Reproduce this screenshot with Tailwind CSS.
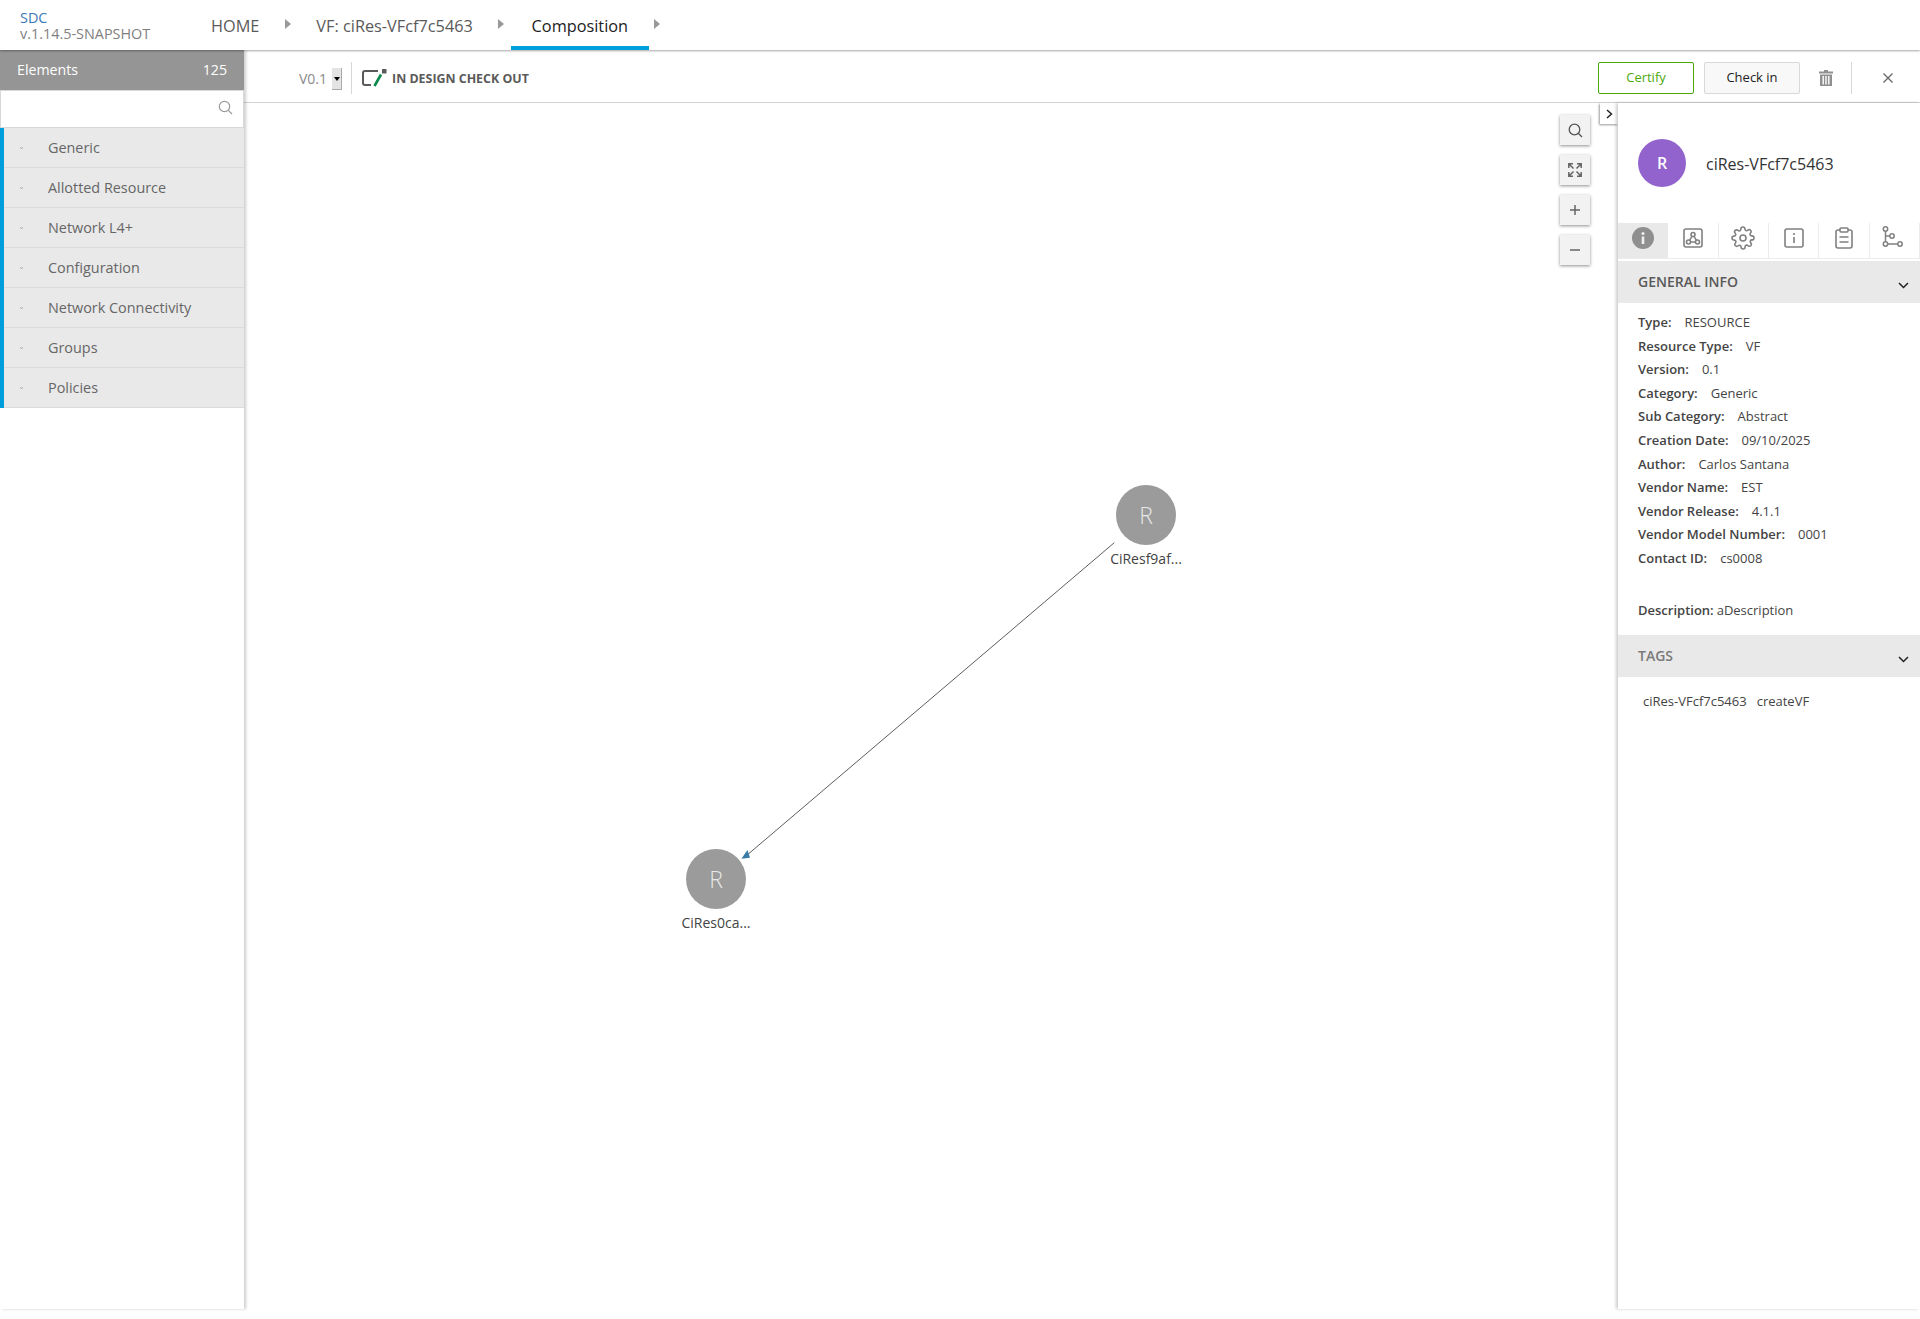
<!DOCTYPE html>
<html>
<head>
<meta charset="utf-8">
<script src="https://cdn.jsdelivr.net/npm/@tailwindcss/browser@4"></script>
</head>
<body class="bg-white font-['Open_Sans',sans-serif] w-[1920px] h-[1319px] overflow-hidden text-[#5a5a5a]">
<header class="relative z-20 flex h-[50px] items-stretch bg-white shadow-[0_1px_2px_rgba(0,0,0,0.35)]">
  <div class="w-[211px] pl-5 pt-[10px] text-[14.4px]">
    <div class="leading-[16px] text-[#3d7ab8]">SDC</div>
    <div class="leading-[15px] text-[#7f7f7f]">v.1.14.5-SNAPSHOT</div>
  </div>
  <nav class="flex items-stretch text-[16.3px]">
    <div class="pt-[14px] text-[#5a5a5a]">HOME</div>
    <svg class="mt-[19px] ml-[26px] mr-[25px]" width="6" height="10" viewBox="0 0 6 10"><path d="M0 0l6 5-6 5z" fill="#999"/></svg>
    <div class="pt-[14px]">VF: ciRes-VFcf7c5463</div>
    <svg class="mt-[19px] ml-[25px] mr-[7px]" width="6" height="10" viewBox="0 0 6 10"><path d="M0 0l6 5-6 5z" fill="#999"/></svg>
    <div class="w-[138px] pt-[14px] text-center text-[#222] border-b-4 border-[#009fdb]">Composition</div>
    <svg class="mt-[19px] ml-[5px]" width="6" height="10" viewBox="0 0 6 10"><path d="M0 0l6 5-6 5z" fill="#999"/></svg>
  </nav>
</header>
<main class="flex h-[1259px] items-stretch">
  <aside class="relative z-10 w-[244px] shadow-[2px_0_3px_rgba(0,0,0,0.2)] bg-white">
    <div class="flex h-10 items-center justify-between bg-[#959595] pl-[17px] pr-[17px] text-[14.2px] font-medium text-white"><span>Elements</span><span>125</span></div>
    <div class="flex h-[38px] items-center justify-end border border-[#d8d8d8] bg-white pr-[10px] pb-[3px]">
      <svg width="15" height="15" viewBox="0 0 15 15" fill="none" stroke="#999" stroke-width="1.2"><circle cx="6.5" cy="6.5" r="5.2"/><path d="M10.3 10.3L14 14"/></svg>
    </div>
    <div class="border-l-4 border-[#009fdb] text-[14.4px] font-medium text-[#666]">
      <div class="flex h-10 items-center border-b border-[#dcdcdc] bg-[#e9e9e9]"><svg class="ml-[16px] mr-[25px]" width="3" height="2" viewBox="0 0 3 2"><path d="M0 0l1.5 2L3 0" fill="none" stroke="#999" stroke-width="0.7"/></svg>Generic</div>
      <div class="flex h-10 items-center border-b border-[#dcdcdc] bg-[#e9e9e9]"><svg class="ml-[16px] mr-[25px]" width="3" height="2" viewBox="0 0 3 2"><path d="M0 0l1.5 2L3 0" fill="none" stroke="#999" stroke-width="0.7"/></svg>Allotted Resource</div>
      <div class="flex h-10 items-center border-b border-[#dcdcdc] bg-[#e9e9e9]"><svg class="ml-[16px] mr-[25px]" width="3" height="2" viewBox="0 0 3 2"><path d="M0 0l1.5 2L3 0" fill="none" stroke="#999" stroke-width="0.7"/></svg>Network L4+</div>
      <div class="flex h-10 items-center border-b border-[#dcdcdc] bg-[#e9e9e9]"><svg class="ml-[16px] mr-[25px]" width="3" height="2" viewBox="0 0 3 2"><path d="M0 0l1.5 2L3 0" fill="none" stroke="#999" stroke-width="0.7"/></svg>Configuration</div>
      <div class="flex h-10 items-center border-b border-[#dcdcdc] bg-[#e9e9e9]"><svg class="ml-[16px] mr-[25px]" width="3" height="2" viewBox="0 0 3 2"><path d="M0 0l1.5 2L3 0" fill="none" stroke="#999" stroke-width="0.7"/></svg>Network Connectivity</div>
      <div class="flex h-10 items-center border-b border-[#dcdcdc] bg-[#e9e9e9]"><svg class="ml-[16px] mr-[25px]" width="3" height="2" viewBox="0 0 3 2"><path d="M0 0l1.5 2L3 0" fill="none" stroke="#999" stroke-width="0.7"/></svg>Groups</div>
      <div class="flex h-10 items-center border-b border-[#dcdcdc] bg-[#e9e9e9]"><svg class="ml-[16px] mr-[25px]" width="3" height="2" viewBox="0 0 3 2"><path d="M0 0l1.5 2L3 0" fill="none" stroke="#999" stroke-width="0.7"/></svg>Policies</div>
    </div>
  </aside>
  <div class="flex flex-1 flex-col">
    <div class="flex h-[53px] items-center border-b border-[#d2d2d2] bg-white pt-[4px]">
      <span class="ml-[55px] mt-[2px] text-sm text-[#8a8a8a]">V0.1</span>
      <div class="ml-[5px] mt-[2px] flex h-[22px] w-[10px] items-center justify-center border-r border-b border-[#aaa] bg-[#e4e4e4]"><span class="border-x-[3px] border-t-[4px] border-x-transparent border-t-black"></span></div>
      <div class="ml-[9px] h-[32px] w-px bg-[#d8d8d8]"></div>
      <svg class="ml-[10px]" width="25" height="18" viewBox="0 0 25 18" fill="none"><path d="M16 2H3a2 2 0 0 0-2 2v10a2 2 0 0 0 2 2h6" stroke="#5a5a5a" stroke-width="2"/><rect x="20" y="0" width="4.500" height="4.500" rx="0.500" fill="#5a5a5a"/><path d="M19 5.500L12.500 17" stroke="#0c8a4e" stroke-width="2.600"/></svg>
      <span class="ml-[5px] mt-[2px] text-[12.4px] font-bold text-[#5a5a5a]">IN DESIGN CHECK OUT</span>
      <div class="ml-auto flex h-8 w-[96px] items-center justify-center rounded-[2px] border border-[#4ca90c] text-[13px] font-medium text-[#4ca90c]">Certify</div>
      <div class="ml-[10px] flex h-8 w-[96px] items-center justify-center rounded-[2px] border border-[#d8d8d8] bg-[#f8f8f8] text-[13px] font-medium text-[#222]">Check in</div>
      <svg class="ml-[19px]" width="14" height="16" viewBox="0 0 14 16" fill="#8f8f8f"><path d="M5 0h4v1.5h5v2H0v-2h5z"/><path d="M1 4.500h12V16H1zM3.500 6v8.500h1.400V6zM6.300 6v8.500h1.400V6zM9.100 6v8.500h1.400V6z" fill-rule="evenodd"/></svg>
      <div class="ml-[18px] h-8 w-px bg-[#d8d8d8]"></div>
      <svg class="ml-[31px] mr-[27px]" width="10" height="10" viewBox="0 0 10 10" stroke="#666" stroke-width="1.3"><path d="M0.500 0.500l9 9M9.500 0.500l-9 9"/></svg>
    </div>
    <div class="flex flex-1">
      <div class="relative flex-1">
        <div class="absolute top-[12px] right-[28px] flex flex-col gap-[10px]">
          <div class="flex size-[30px] items-center justify-center bg-[#f2f2f2] shadow-[0_1px_3px_rgba(0,0,0,0.45)]"><svg width="15" height="15" viewBox="0 0 15 15" fill="none" stroke="#555" stroke-width="1.300"><circle cx="6.500" cy="6.500" r="5.300"/><path d="M10.300 10.300L14 14"/></svg></div>
          <div class="flex size-[30px] items-center justify-center bg-[#f2f2f2] shadow-[0_1px_3px_rgba(0,0,0,0.45)]"><svg width="14" height="14" viewBox="0 0 14 14" fill="none" stroke="#666" stroke-width="1.500"><path d="M0.800 5V0.800H5M0.800 0.800L5.500 5.500M9 0.800h4.200V5M13.200 0.800L8.500 5.500M0.800 9v4.200H5M0.800 13.200L5.500 8.500M9 13.200h4.200V9M13.200 13.200L8.500 8.500"/></svg></div>
          <div class="flex size-[30px] items-center justify-center bg-[#f2f2f2] shadow-[0_1px_3px_rgba(0,0,0,0.45)]"><svg width="12" height="12" viewBox="0 0 12 12" stroke="#666" stroke-width="1.500"><path d="M6 1v10M1 6h10"/></svg></div>
          <div class="flex size-[30px] items-center justify-center bg-[#f2f2f2] shadow-[0_1px_3px_rgba(0,0,0,0.45)]"><svg width="12" height="12" viewBox="0 0 12 12" stroke="#666" stroke-width="1.500"><path d="M1 6h10"/></svg></div>
        </div>
        <div class="absolute top-0 right-0 z-10 flex h-[21px] w-[18px] items-center justify-center bg-white pl-[1px] shadow-[-1px_1px_2px_rgba(0,0,0,0.4)]"><svg width="7" height="10" viewBox="0 0 7 10" fill="none" stroke="#222" stroke-width="1.500"><path d="M1 1l4.500 4L1 9"/></svg></div>
        <svg class="absolute top-0 left-0" width="1374" height="1206" fill="none"><path d="M870.300 439.700L502 753" stroke="#333" stroke-width="0.800"/><path d="M497.400 755.700l6.100-8.700 2.500 7.700z" fill="#3a7ca5"/></svg>
        <div class="absolute left-[872px] top-[382px] flex w-[60px] flex-col items-center"><div class="flex size-[60px] shrink-0 items-center justify-center rounded-full bg-[#9b9b9b] text-[23px] font-light text-[#e8e8e8]">R</div><div class="mt-[3px] text-[14px] whitespace-nowrap text-[#444]">CiResf9af...</div></div>
        <div class="absolute left-[442px] top-[746px] flex w-[60px] flex-col items-center"><div class="flex size-[60px] shrink-0 items-center justify-center rounded-full bg-[#9b9b9b] text-[23px] font-light text-[#e8e8e8]">R</div><div class="mt-[3px] text-[14px] whitespace-nowrap text-[#444]">CiRes0ca...</div></div>
      </div>
      <aside class="relative z-10 w-[302px] bg-white shadow-[-2px_0_3px_rgba(0,0,0,0.2)]">
        <div class="flex h-[120px] items-center pl-5">
          <div class="flex size-12 items-center justify-center rounded-full bg-[#9263cc] text-base font-semibold text-white">R</div>
          <div class="ml-5 mt-[1px] text-base text-[#333]">ciRes-VFcf7c5463</div>
        </div>
        <div class="flex h-[36px] border-b border-[#ececec] bg-white">
          <div class="flex w-[50px] justify-center bg-[#e9e9e9] pt-[4px]"><svg width="22" height="22" viewBox="0 0 22 22"><circle cx="11" cy="11" r="11" fill="#8f8f8f"/><rect x="9.700" y="9.500" width="2.600" height="7.500" fill="#eee"/><circle cx="11" cy="6.500" r="1.600" fill="#eee"/></svg></div>
          <div class="flex w-[51px] justify-center border-r border-[#ececec] pt-[5px]"><svg width="20" height="20" viewBox="0 0 20 20" fill="none" stroke="#808080" stroke-width="1.600"><rect x="1" y="1" width="18" height="18" rx="2"/><circle cx="10" cy="6.500" r="2"/><circle cx="5.500" cy="14" r="2"/><circle cx="14.500" cy="14" r="2"/><path d="M9 8.300L6.500 12.300M11 8.300l2.500 4M7.500 14h5"/></svg></div>
          <div class="flex w-[50px] justify-center border-r border-[#ececec] pt-[3px] pr-[2px]"><svg width="24" height="24" viewBox="0 0 24 24" fill="none" stroke="#808080" stroke-width="1.600"><circle cx="12" cy="12" r="3"/><path d="M19.400 15a1.650 1.650 0 0 0 .33 1.820l.06.06a2 2 0 1 1-2.830 2.830l-.06-.06a1.650 1.650 0 0 0-2.800 1.170V21a2 2 0 1 1-4 0v-.09a1.650 1.650 0 0 0-2.800-1.170l-.06.06a2 2 0 1 1-2.830-2.830l.06-.06a1.650 1.650 0 0 0-1.170-2.800H3a2 2 0 1 1 0-4h.09a1.650 1.650 0 0 0 1.170-2.800l-.06-.06a2 2 0 1 1 2.830-2.830l.06.06a1.650 1.650 0 0 0 2.800-1.170V3a2 2 0 1 1 4 0v.09a1.650 1.650 0 0 0 2.800 1.170l.06-.06a2 2 0 1 1 2.830 2.830l-.06.06a1.650 1.650 0 0 0 1.170 2.800H21a2 2 0 1 1 0 4h-.09a1.650 1.650 0 0 0-1.510 1z"/></svg></div>
          <div class="flex w-[50px] justify-center border-r border-[#ececec] pt-[5px]"><svg width="20" height="20" viewBox="0 0 20 20" fill="none" stroke="#808080" stroke-width="1.600"><rect x="1" y="1" width="18" height="18" rx="2"/><path d="M10 9v6"/><path d="M10 5v2"/></svg></div>
          <div class="flex w-[51px] justify-center border-r border-[#ececec] pt-[4px]"><svg width="18" height="22" viewBox="0 0 18 22" fill="none" stroke="#808080" stroke-width="1.600"><rect x="1" y="3" width="16" height="18" rx="2"/><rect x="5" y="1" width="8" height="4" rx="1" fill="#fff"/><path d="M4.500 10h9M4.500 15h9"/></svg></div>
          <div class="flex w-[50px] justify-center border-r border-[#ececec] pt-[3px] pr-[5px]"><svg width="21" height="22" viewBox="0 0 21 22" fill="none" stroke="#808080" stroke-width="1.500"><circle cx="3.500" cy="3" r="2.200"/><circle cx="3.500" cy="18" r="2.200"/><circle cx="10" cy="10" r="2.200"/><circle cx="18" cy="18" r="2.200"/><path d="M3.500 5.200v10.600M3.500 10H7.800M5.700 18H15.800"/></svg></div>
        </div>
        <div class="mt-[2px] flex h-[42px] items-center justify-between bg-[#e9e9e9] pl-5 pr-[11px] text-sm font-semibold text-[#5a5a5a]"><span>GENERAL INFO</span><svg class="mt-[6px]" width="11" height="7" viewBox="0 0 11 7" fill="none" stroke="#222" stroke-width="1.500"><path d="M1 1l4.500 4.500L10 1"/></svg></div>
        <div class="px-5 pt-[8px] text-[13px] leading-[23.6px] text-[#444]">
          <div><b class="font-semibold mr-[13px]">Type:</b>RESOURCE</div>
          <div><b class="font-semibold mr-[13px]">Resource Type:</b>VF</div>
          <div><b class="font-semibold mr-[13px]">Version:</b>0.1</div>
          <div><b class="font-semibold mr-[13px]">Category:</b>Generic</div>
          <div><b class="font-semibold mr-[13px]">Sub Category:</b>Abstract</div>
          <div><b class="font-semibold mr-[13px]">Creation Date:</b>09/10/2025</div>
          <div><b class="font-semibold mr-[13px]">Author:</b>Carlos Santana</div>
          <div><b class="font-semibold mr-[13px]">Vendor Name:</b>EST</div>
          <div><b class="font-semibold mr-[13px]">Vendor Release:</b>4.1.1</div>
          <div><b class="font-semibold mr-[13px]">Vendor Model Number:</b>0001</div>
          <div><b class="font-semibold mr-[13px]">Contact ID:</b>cs0008</div>
          <div class="mt-[28px]"><b class="font-semibold mr-[3px]">Description:</b>aDescription</div>
        </div>
        <div class="mt-[13px] flex h-[42px] items-center justify-between bg-[#e9e9e9] pl-5 pr-[11px] text-sm font-semibold text-[#7a7a7a]"><span>TAGS</span><svg class="mt-[6px]" width="11" height="7" viewBox="0 0 11 7" fill="none" stroke="#222" stroke-width="1.500"><path d="M1 1l4.500 4.500L10 1"/></svg></div>
        <div class="flex gap-[10px] pl-[25px] pt-[15px] text-[13px] text-[#444]"><span>ciRes-VFcf7c5463</span><span>createVF</span></div>
      </aside>
    </div>
  </div>
</main>
</body>
</html>
